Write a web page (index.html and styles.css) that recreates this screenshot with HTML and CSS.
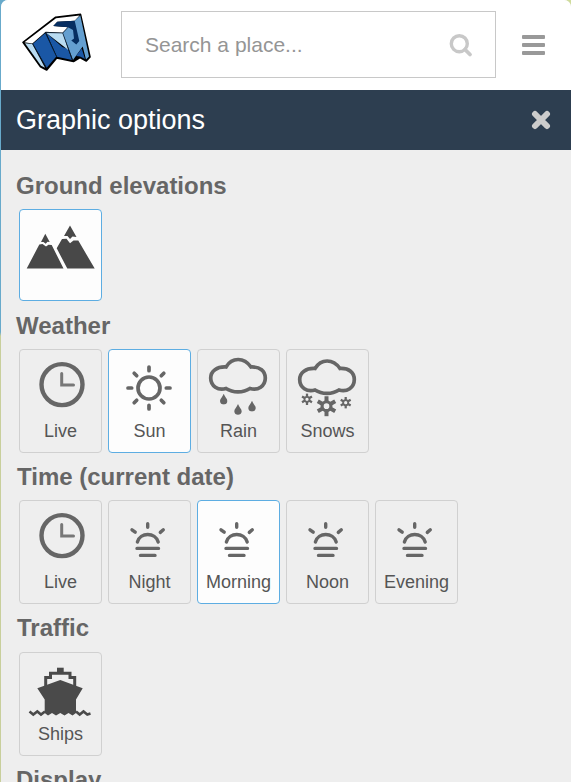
FILE: index.html
```
<!DOCTYPE html>
<html lang="en">

<head>
  <meta charset="UTF-8">
  <meta name="viewport" content="width=device-width, initial-scale=1.0">
  <title>Graphic options</title>
  <link rel="stylesheet" href="styles.css">
</head>

<body>
  <!-- shared icons -->
  <svg class="sprite" width="0" height="0">
    <symbol id="clock" viewBox="0 0 81 70">
      <circle cx="42" cy="34.6" r="20.5" fill="none" stroke="#666" stroke-width="4.4"/>
      <path d="M41.7 23.5V35H53.5" fill="none" stroke="#777" stroke-width="3" stroke-linecap="round"/>
    </symbol>
    <symbol id="cloud" viewBox="0 0 81 70">
      <path d="M28 17C34 7 46 7 53 17C62 16.5 67.3 21 67.3 28C67.3 36 60 41 52 38.5C45 43 35 43 28 38.5C20 41 12.7 36 12.7 28C12.7 21 19 16.5 28 17Z" fill="none" stroke="#666" stroke-width="3.7"/>
    </symbol>
    <symbol id="drop" viewBox="0 0 8 11">
      <path d="M4 0C5 3 7.7 5 7.7 7.3C7.7 12 .3 12 .3 7.3C.3 5 3 3 4 0Z" fill="#666"/>
    </symbol>
    <symbol id="flake" viewBox="-10 -10 20 20">
      <path d="M0-9.5V9.5M-8.3-4.8L8.3 4.8M-8.3 4.8L8.3-4.8" stroke="#666" stroke-width="3.8"/>
      <circle r="4.2" fill="#eee" stroke="#666" stroke-width="3"/>
    </symbol>
    <symbol id="sunrise" viewBox="0 0 81 70">
      <g fill="none" stroke="#666" stroke-width="3.4" stroke-linecap="round">
        <path d="M28.4 41C31 31 46.5 31 49.2 41"/>
        <path d="M38.7 22.8V26.2M23 28.8L26.2 31.2M54.3 28.8L51.3 31.4M28 47.4H49.5M31.5 54.4H46"/>
      </g>
    </symbol>
  </svg>

  <div class="panel">
    <header class="header">
      <svg class="logo" viewBox="20 10 75 65" width="75" height="65">
        <path d="M23 42.3L55.7 17.2L80.5 14.3L90 57L86.3 61L80 57.5L73.5 61.5L56.7 58L46.7 70L40.5 66.8Z" fill="#000" stroke="#000" stroke-width="1.6" stroke-linejoin="round"/>
        <path d="M24.5 42.3L56 18.3L79.5 15.5L74.7 20.7L57.3 21.7L53.3 26L68 27.3L62.7 32.7L45.7 31.7L32.3 43.5Z" fill="#fff"/>
        <path d="M25 43.2L32.3 44L45 67.8L41 65.7Z" fill="#b9dcf2"/>
        <path d="M33 43.7L45.3 33L56.3 56.5L46.7 67.7Z" fill="#1a57a5"/>
        <path d="M46.3 33L57 56.7L72 60L68 49L62.3 47Z" fill="#1a57a5"/>
        <path d="M46 32.7L62.7 33L68.3 50Z" fill="#b9dcf2"/>
        <path d="M62.7 33L68 27.3L80.3 15.5L89 56.5L86 59.5L82.7 46.5L73 60Z" fill="#649fd0"/>
        <path d="M53.3 26L57.3 21.7L74.7 20.7L79.3 41L76.3 44.5L71.3 40.5L74 38.5L73 30L68 27.3Z" fill="#062e61"/>
        <path d="M76 56L81.7 48.5L85 59L80 56.5Z" fill="#1a57a5"/>
        <path d="M45.3 32.5L56.7 57M62.7 33L72.5 60M32.5 43.7L46 67M45.5 32.5L62.7 33L68 27.3" fill="none" stroke="#0a2037" stroke-width=".7"/>
      </svg>
      <div class="search">
        <span>Search a place...</span>
        <svg viewBox="0 0 24 24" width="24" height="24">
          <circle cx="10.3" cy="9.7" r="8" fill="none" stroke="#c8c8c8" stroke-width="3.4"/>
          <path d="M16 15.5L21 20.5" stroke="#c8c8c8" stroke-width="3.8" stroke-linecap="round"/>
        </svg>
      </div>
      <div class="burger"><i></i><i></i><i></i></div>
    </header>

    <div class="title-bar">
      <h1>Graphic options</h1>
      <svg viewBox="0 0 20 20" width="20" height="20">
        <path d="M4 4L16 16M16 4L4 16" stroke="#ccc" stroke-width="6" stroke-linecap="round"/>
      </svg>
    </div>

    <main class="options">
      <h2>Ground elevations</h2>
      <div class="tiles">
        <div class="tile short active">
          <svg viewBox="0 0 81 70" fill="#484848">
            <path d="M6.7 58.6L19.3 34.5L22.5 34L26 36.6L28.5 34.8L31.7 35L43.5 58.6Z"/>
            <path d="M25.3 23.7L29.7 32L27.5 31.8L25.7 33.8L23.5 32L21 32Z"/>
            <path d="M47.3 58.6L36.7 38.3L42 29L46.5 28.8L50 33.3L53.5 30.5L58.3 30.5L74.7 58.6Z"/>
            <path d="M50 15.5L56.5 27L52.5 26.5L50 29L47.5 26L44 26Z"/>
          </svg>
        </div>
      </div>

      <h2 class="weather">Weather</h2>
      <div class="tiles">
        <div class="tile">
          <svg><use href="#clock"/></svg>
          <span>Live</span>
        </div>
        <div class="tile active">
          <svg viewBox="0 0 81 70" fill="none" stroke="#666" stroke-width="3.7" stroke-linecap="round">
            <circle cx="40" cy="38" r="11"/>
            <path d="M40 17V20.7M40 55.3V59M19 38H22.7M57.3 38H61M25.2 23.2L27.7 25.7M54.8 23.2L52.3 25.7M25.2 52.8L27.7 50.3M54.8 52.8L52.3 50.3"/>
          </svg>
          <span>Sun</span>
        </div>
        <div class="tile">
          <svg viewBox="0 0 81 70">
            <use href="#cloud" width="81" height="70"/>
            <use href="#drop" x="21.7" y="43.7" width="8" height="11"/>
            <use href="#drop" x="36" y="54" width="8" height="11"/>
            <use href="#drop" x="50" y="50.7" width="8" height="11"/>
          </svg>
          <span>Rain</span>
        </div>
        <div class="tile">
          <svg viewBox="0 0 81 70">
            <use href="#cloud" y="1.5" width="81" height="70"/>
            <use href="#flake" x="14" y="43.3" width="12" height="12"/>
            <use href="#flake" x="29" y="45.7" width="21" height="21"/>
            <use href="#flake" x="52.7" y="46.7" width="12" height="12"/>
          </svg>
          <span>Snows</span>
        </div>
      </div>

      <h2 class="inset">Time (current date)</h2>
      <div class="tiles">
        <div class="tile">
          <svg><use href="#clock"/></svg>
          <span>Live</span>
        </div>
        <div class="tile">
          <svg><use href="#sunrise"/></svg>
          <span>Night</span>
        </div>
        <div class="tile active">
          <svg><use href="#sunrise"/></svg>
          <span>Morning</span>
        </div>
        <div class="tile">
          <svg><use href="#sunrise"/></svg>
          <span>Noon</span>
        </div>
        <div class="tile">
          <svg><use href="#sunrise"/></svg>
          <span>Evening</span>
        </div>
      </div>

      <h2 class="inset">Traffic</h2>
      <div class="tiles">
        <div class="tile">
          <svg viewBox="0 0 81 70" fill="#4a4a4a">
            <path d="M37 14.7H43.7V20H37Z"/>
            <path d="M25.7 33V24.5H30.5V20.3H50V24.5H54.7V33" fill="none" stroke="#4a4a4a" stroke-width="3"/>
            <path d="M17.3 35.3L40.3 27L62.7 35.3L56 46.5V60L52.5 62.5L48.5 60L44.5 62.5L40.3 60L36 62.5L32 60L28 62.5L24.7 60V46.5Z"/>
            <path d="M9.5 58.5L13.3 61.5L17.3 58.5L21 61.5L25 58.5M56 58.5L59.7 61.5L63.5 58.5L67.3 61.5L70.5 60.5" fill="none" stroke="#4a4a4a" stroke-width="2.6"/>
          </svg>
          <span>Ships</span>
        </div>
      </div>

      <h2>Display</h2>
    </main>
  </div>
</body>

</html>
```
FILE: styles.css
```
* {
  margin: 0;
  padding: 0;
  box-sizing: border-box;
}

body {
  height: 782px;
  padding-left: 1px;
  font-family: "Liberation Sans", Arial, sans-serif;
  background: linear-gradient(to right, transparent 50%, #cfdc9c 50%), linear-gradient(#68aacb 332px, #c8cf9c 336px);
  overflow: hidden;
}

.sprite {
  position: absolute;
}

.panel {
  height: 782px;
  border-radius: 7px 7px 0 0;
  background: #eee;
  overflow: hidden;
}

/* top bar */
.header {
  display: flex;
  align-items: center;
  height: 90px;
  padding: 0 26px 0 19px;
  background: #fff;
}

.logo {
  margin-top: -5px;
}

.search {
  display: flex;
  align-items: center;
  justify-content: space-between;
  width: 375px;
  height: 67px;
  margin: -2px 26px 0;
  padding: 0 22px 0 23px;
  border: 1px solid #c8c8c8;
  color: #959595;
  font-size: 21px;
}

.search span {
  margin-top: 1px;
}

.search svg {
  margin-top: 3px;
}

.burger {
  display: flex;
  flex-direction: column;
  gap: 4px;
  width: 23px;
  margin-top: -1px;
}

.burger i {
  height: 4px;
  border-radius: 1px;
  background: #999;
}

.title-bar {
  display: flex;
  align-items: center;
  justify-content: space-between;
  height: 60px;
  padding: 0 20px 0 15px;
  background: #2d3e50;
}

.title-bar h1 {
  color: #fff;
  font-size: 27px;
  font-weight: normal;
}

/* option groups */
.options {
  padding: 11.7px 15px 0;
}

.options h2 {
  height: 47.5px;
  color: #666;
  font-size: 24px;
  line-height: 48px;
}

.options .inset {
  padding-left: 1px;
}

.options .weather {
  line-height: 49px;
}

.tiles {
  display: flex;
  gap: 6px;
  padding-left: 3px;
}

.tile {
  width: 83px;
  height: 104px;
  border: 1px solid #d0d0d0;
  border-radius: 4px;
  color: #555;
  font-size: 18px;
  text-align: center;
}

.tile.short {
  height: 92px;
}

.tile.active {
  border-color: #5dade2;
  background: #fdfdfd;
}

.tile svg {
  display: block;
  width: 81px;
  height: 70px;
}

.tile span {
  display: block;
  line-height: 22px;
}
```
